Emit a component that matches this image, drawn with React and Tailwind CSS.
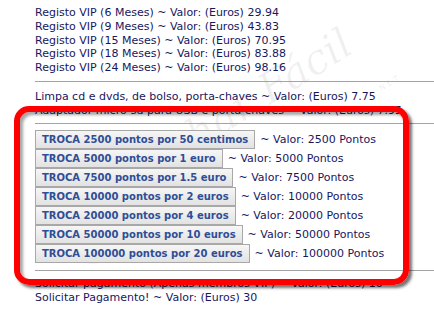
import React from "react";

const vip = [
  ["6", "29.94"],
  ["9", "43.83"],
  ["15", "70.95"],
  ["18", "83.88"],
  ["24", "98.16"],
];

const trocas = [
  ["TROCA 2500 pontos por 50 centimos", "2500"],
  ["TROCA 5000 pontos por 1 euro", "5000"],
  ["TROCA 7500 pontos por 1.5 euro", "7500"],
  ["TROCA 10000 pontos por 2 euros", "10000"],
  ["TROCA 20000 pontos por 4 euros", "20000"],
  ["TROCA 50000 pontos por 10 euros", "50000"],
  ["TROCA 100000 pontos por 20 euros", "100000"],
];

function Hr({ className }) {
  return <div className={"h-px bg-[#a3a3a3] " + className} />;
}

export default function App() {
  return (
    <div className="relative w-[434px] h-[321px] overflow-hidden bg-white font-['DejaVu_Sans',sans-serif] text-[11px] leading-[13.75px] text-[#17175e]">
      {/* watermark (behind text) */}
      <div className="pointer-events-none absolute left-[128px] top-[160px] origin-bottom-left -rotate-[32deg] font-['DejaVu_Serif',serif] italic text-[42px] leading-none text-black/[0.06] whitespace-nowrap">
        Ganhar Fácil
      </div>
      <div className="pointer-events-none absolute left-[378px] top-[76px] -rotate-[32deg] font-['DejaVu_Sans',sans-serif] text-[8px] tracking-[3px] text-black/[0.09]">
        NET
      </div>
      <div className="pointer-events-none absolute left-[68px] top-[214px] w-[50px] h-[50px] rounded-full border-[5px] border-black/[0.05]" />

      <div className="relative ml-[35px] pt-[6px]">
        {vip.map(([m, v]) => (
          <div key={m} className="whitespace-nowrap">
            Registo VIP ({m} Meses) ~ Valor: (Euros) {v}
          </div>
        ))}
        <Hr className="mt-[6px]" />
        <div className="mt-[8px] whitespace-nowrap">
          Limpa cd e dvds, de bolso, porta-chaves ~ Valor: (Euros) 7.75
        </div>
        <div className="whitespace-nowrap">
          Adaptador micro-sd para USB e porta-chaves ~ Valor: (Euros) 7.95
        </div>
        <Hr className="mt-[6px]" />
        <div className="mt-[6px] flex flex-col">
          {trocas.map(([label, pts]) => (
            <div key={pts} className="flex items-center h-[19px] whitespace-nowrap">
              <button className="h-[19px] px-[6px] border border-[#a8a8a8] bg-gradient-to-b from-[#f6f6f6] to-[#e2e2e2] font-bold text-[10px] leading-[17px] text-[#2f4e96] font-['DejaVu_Sans',sans-serif]">
                {label}
              </button>
              <span className="ml-[5px]">~ Valor: {pts} Pontos</span>
            </div>
          ))}
        </div>
        <Hr className="mt-[7px]" />
        <div className="mt-[6px] whitespace-nowrap">
          Solicitar pagamento (Apenas membros VIP) ~ Valor: (Euros) 10
        </div>
        <div className="whitespace-nowrap">
          Solicitar Pagamento! ~ Valor: (Euros) 30
        </div>
      </div>

      {/* red annotation box */}
      <div className="pointer-events-none absolute left-[14px] top-[106px] w-[395px] h-[179px] rounded-[15px] border-[6px] border-[#ff0000] shadow-[3px_3px_3px_rgba(0,0,0,0.55),inset_3px_3px_3px_rgba(0,0,0,0.35)]" />
    </div>
  );
}
